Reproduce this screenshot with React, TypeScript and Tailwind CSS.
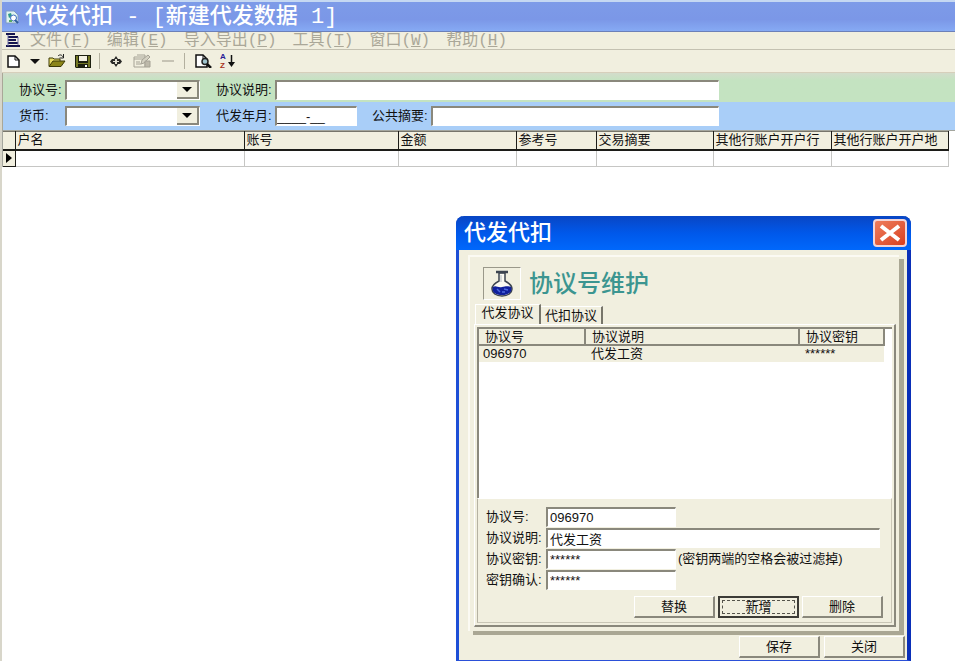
import type { ReactNode } from "react";
import { clsx } from "clsx";

const sans = "font-['Liberation_Sans','Noto_Sans_CJK_SC',sans-serif]";
const mono = "font-['Liberation_Mono','Noto_Sans_CJK_SC',monospace]";
const sunken = "border-t-2 border-l-2 border-[#8a887c] border-r border-b border-r-white border-b-white bg-white outline-none";

const menus = [
  ["文件", "F"],
  ["编辑", "E"],
  ["导入导出", "P"],
  ["工具", "T"],
  ["窗口", "W"],
  ["帮助", "H"],
];

const columns = [
  { name: "户名", width: "w-[229px]" },
  { name: "账号", width: "w-[154px]" },
  { name: "金额", width: "w-[118px]" },
  { name: "参考号", width: "w-[80px]" },
  { name: "交易摘要", width: "w-[117px]" },
  { name: "其他行账户开户行", width: "w-[118px]" },
  { name: "其他行账户开户地", width: "w-[117px]" },
];

function AppIcon() {
  return (
    <svg width="14" height="14" viewBox="0 0 14 14" aria-hidden="true">
      <path d="M1 1h8l4 4v8H1z" fill="#dff3ee" stroke="#7f9cc4" />
      <path d="M3 4l3-1 1 3-3 2z" fill="#2f9a8b" />
      <circle cx="8.500" cy="8" r="3" fill="#fff" stroke="#3a6fc0" />
      <path d="M10 10l3 3" stroke="#2f5c9c" strokeWidth="2" />
      <path d="M4 10h3v2H4z" fill="#56a868" />
    </svg>
  );
}

function DocIcon() {
  return (
    <svg width="14" height="15" viewBox="0 0 14 15" aria-hidden="true">
      <path d="M0 1h9M2 4h10M2 7h8M2 10h10M0 13h14" stroke="#15154f" strokeWidth="2" />
      <path d="M2 2v11M12 4v8" stroke="#6c6ca8" />
    </svg>
  );
}

function NewIcon() {
  return (
    <svg width="13" height="13" viewBox="0 0 13 13" aria-hidden="true">
      <path d="M1 1h7l4 4v7H1z" fill="#fff" stroke="#111" strokeWidth="1.500" />
      <path d="M8 1v4h4" fill="none" stroke="#111" />
    </svg>
  );
}

function OpenIcon() {
  return (
    <svg width="18" height="14" viewBox="0 0 18 14" aria-hidden="true">
      <path d="M1 12V4h4l1 1h6v3" fill="#e8dc62" stroke="#3c3a08" />
      <path d="M1 12.500L5 7h12l-4 5.500z" fill="#8b8518" stroke="#3c3a08" />
      <path d="M10 2c2-2 4-1 5 1M15.500 0v4h-4" fill="none" stroke="#222" />
    </svg>
  );
}

function SaveIcon() {
  return (
    <svg width="16" height="13" viewBox="0 0 16 13" aria-hidden="true">
      <path d="M0 0h16v13H1l-1-1z" fill="#1d2010" />
      <path d="M1 1h2v7h10V1h2v11h-2V9H3v3H1z" fill="#747824" />
      <path d="M4 1h8v5H4z" fill="#f4f1e2" />
      <path d="M10 10h2v2h-2z" fill="#fff" />
    </svg>
  );
}

function PlusIcon() {
  return (
    <svg width="12" height="11" viewBox="0 0 12 11" aria-hidden="true">
      <path d="M6 0l2 3h2l2 2.500-2 2.500H8l-2 3-2-3H2L0 5.500 2 3h2z" fill="#2a2a28" />
      <path d="M3 5h6v1H3zM5 3h2v5H5z" fill="#e4e2d4" />
    </svg>
  );
}

function EditIcon() {
  return (
    <svg width="18" height="14" viewBox="0 0 18 14" aria-hidden="true">
      <path d="M1 3h11v10H1zM1 5h11M3 8h4M3 10h5M4 1h8v2" fill="none" stroke="#a5a295" />
      <path d="M8 10l1-4 6-5 2 2-6 6z" fill="#d4d1c2" stroke="#a5a295" />
      <path d="M12 7h5v6h-5z" fill="#bdb9aa" stroke="#a5a295" />
    </svg>
  );
}

function PreviewIcon() {
  return (
    <svg width="17" height="14" viewBox="0 0 17 14" aria-hidden="true">
      <path d="M1 1h7l4 4v8H1z" fill="#fff" stroke="#111" strokeWidth="1.500" />
      <path d="M8 1v4h4" fill="none" stroke="#111" />
      <circle cx="10" cy="7.500" r="3" fill="#9fc4ce" stroke="#222" strokeWidth="1.500" />
      <path d="M12 10l4 4" stroke="#111" strokeWidth="2.500" />
    </svg>
  );
}

function SortIcon() {
  return (
    <svg width="18" height="20" viewBox="0 0 18 20" aria-hidden="true">
      <text x="2" y="8" fontSize="8" fontWeight="bold" fontFamily="Liberation Sans" fill="#2a1c96">A</text>
      <text x="2" y="17" fontSize="8" fontWeight="bold" fontFamily="Liberation Sans" fill="#a8321c">Z</text>
      <path d="M13.500 4v9" stroke="#111" strokeWidth="1.500" />
      <path d="M10 11h7l-3.500 5z" fill="#111" />
    </svg>
  );
}

function FlaskIcon() {
  return (
    <svg width="24" height="28" viewBox="0 0 24 28" aria-hidden="true">
      <path d="M9 3v8C5 13 2 16 2 19c0 4 4 7 10 7s10-3 10-7c0-3-3-6-7-8V3z" fill="#fbfaf2" stroke="#3d4450" strokeWidth="1.500" />
      <path d="M3 17c3-2 5 1 9 0s6-1 9 0c2 5-3 8-9 8s-11-3-9-8z" fill="#10209c" />
      <path d="M7 19l3 3M14 19l4 1M12 22h3" stroke="#4d6ae0" strokeWidth="1.500" />
      <path d="M6 2h12" stroke="#3d4450" strokeWidth="2.500" />
      <path d="M11 5v7" stroke="#b3bac2" />
    </svg>
  );
}

function ToolButton({ label, className, children }: { label: string; className: string; children: ReactNode }) {
  return (
    <button type="button" aria-label={label} className={clsx("flex h-5 items-center justify-center", className)}>
      {children}
    </button>
  );
}

function Combo({ id, label }: { id: string; label: string }) {
  return (
    <>
      <label htmlFor={id} className="w-[46px]">{label}</label>
      <div className="relative h-5 w-[135px]">
        <select id={id} className={clsx("h-full w-full appearance-none", sunken)} />
        <span className="pointer-events-none absolute top-0.5 right-px flex h-[17px] w-[22px] items-center justify-center border-r-2 border-b-2 border-[#8a887c] bg-[#f1efdf]">
          <svg width="10" height="5" viewBox="0 0 10 5" aria-hidden="true"><path d="M0 0h10L5 5z" fill="#000" /></svg>
        </span>
      </div>
    </>
  );
}

function PushButton({ children, focused = false }: { children: ReactNode; focused?: boolean }) {
  return (
    <button
      type="button"
      className={clsx(
        "h-[22px] w-[81px] bg-[#f1efdf]",
        focused
          ? "border-2 border-[#3c3b36] p-0.5"
          : "border-t border-l border-r-2 border-b-2 border-t-white border-l-white border-r-[#8a887c] border-b-[#8a887c]",
      )}
    >
      <span className={clsx("flex h-full items-center justify-center", focused && "border border-dashed border-[#55544c]")}>{children}</span>
    </button>
  );
}

function FormRow({ id, label, value, wide = false, note }: { id: string; label: string; value: string; wide?: boolean; note?: string }) {
  return (
    <div className="flex h-5 items-center">
      <label htmlFor={id} className="w-[60px]">{label}</label>
      <input
        id={id}
        type="text"
        defaultValue={value}
        className={clsx("h-full px-0.5", sunken, wide ? "w-[334px]" : "w-[130px]")}
      />
      {note && <span className="ml-0.5 whitespace-nowrap">{note}</span>}
    </div>
  );
}

function AgreementDialog() {
  return (
    <section
      role="dialog"
      aria-labelledby="dialog-title"
      className="absolute top-[216px] left-[454px] w-[455px] rounded-t-lg border-r-4 border-b border-l-[3px] border-r-[#0a2fb8] border-b-[#2b50d8] border-l-[#1d4fd6] bg-[#f1efdf]"
    >
      <header className="-mr-1 -ml-[3px] flex h-[34px] items-center justify-between rounded-t-lg bg-linear-to-b from-[#0846c4] via-[#0058ea] via-50% to-[#0068fc] pr-1 pl-2">
        <h2 id="dialog-title" className={clsx("pt-1 text-[22px] leading-[30px] font-medium text-white", mono)}>代发代扣</h2>
        <button type="button" aria-label="关闭窗口" className="flex h-7 w-[34px] items-center justify-center rounded-sm border-2 border-[#f3d5d6] bg-linear-to-br from-[#ee7d5c] to-[#d83d1c]">
          <svg width="22" height="18" viewBox="0 0 22 18" aria-hidden="true"><path d="M2 2l18 14M20 2L2 16" stroke="#fff" strokeWidth="4" /></svg>
        </button>
      </header>

      <div className="mt-[5px] mr-2 ml-[9px] border-t-2 border-l-2 border-[#fbfaf3] pb-1 shadow-[5px_4px_0_#aaa794]">
        <div className="flex items-center gap-2 pt-2.5 pl-[13px]">
          <div className="flex h-[33px] w-[38px] items-center justify-center border-t border-l border-r border-b border-t-[#9a988a] border-l-[#9a988a] border-r-white border-b-white">
            <FlaskIcon />
          </div>
          <h3 className={clsx("text-2xl leading-[30px] font-medium text-[#3c9590]", sans)}>协议号维护</h3>
        </div>

        <div role="tablist" className="mt-1 flex h-5 items-end pl-[5px]">
          <button type="button" role="tab" aria-selected="true" className="h-5 w-[66px] border-t border-l border-r-2 border-t-white border-l-white border-r-[#77756a] pb-1 leading-4">代发协议</button>
          <button type="button" role="tab" aria-selected="false" className="h-[18px] w-[62px] border-t border-r-2 border-t-white border-r-[#77756a] leading-4">代扣协议</button>
        </div>

        <div role="tabpanel" className="mr-[3px] ml-1 border-t border-r-2 border-b-2 border-l border-t-white border-r-[#8a887c] border-b-[#8a887c] border-l-white pt-0.5 pr-0.5 pb-0.5 pl-0.5">
          <div className="h-[171px] border-t-2 border-l-2 border-[#8a887c] bg-white">
            <table className="w-[406px] table-fixed border-collapse text-left">
              <colgroup>
                <col className="w-[106px]" />
                <col className="w-[214px]" />
                <col />
              </colgroup>
              <thead>
                <tr className="h-4 border-b-2 border-[#8a887c] bg-[#f1efdf] leading-[14px]">
                  {["协议号", "协议说明", "协议密钥"].map((name) => (
                    <th key={name} scope="col" className="border-r-2 border-[#8a887c] p-0 pl-1.5 font-normal">{name}</th>
                  ))}
                </tr>
              </thead>
              <tbody>
                <tr className="h-4 bg-[#f1efdf] leading-4">
                  <td className="p-0 pl-1">096970</td>
                  <td className="p-0 pl-1.5">代发工资</td>
                  <td className="p-0 pl-1.5">******</td>
                </tr>
              </tbody>
            </table>
          </div>

          <form className="border border-t-white border-r-[#c9c6b6] border-b-[#c9c6b6] border-l-[#b5b2a2] pt-2 pb-1 pl-2">
            <div className="flex flex-col gap-px">
              <FormRow id="agreement-no" label="协议号:" value="096970" />
              <FormRow id="agreement-desc" label="协议说明:" value="代发工资" wide />
              <FormRow id="agreement-key" label="协议密钥:" value="******" note="(密钥两端的空格会被过滤掉)" />
              <FormRow id="agreement-key-confirm" label="密钥确认:" value="******" />
            </div>
            <div className="mt-1.5 flex justify-end gap-[3px] pr-2">
              <PushButton>替换</PushButton>
              <PushButton focused>新增</PushButton>
              <PushButton>删除</PushButton>
            </div>
          </form>
        </div>
      </div>

      <footer className="mt-[5px] flex justify-end gap-1 pr-0.5 pb-0.5">
        <PushButton>保存</PushButton>
        <PushButton>关闭</PushButton>
      </footer>
    </section>
  );
}

export default function App() {
  return (
    <div className={clsx("relative min-h-screen overflow-hidden border-l-2 border-[#d8d6ca] bg-white text-[13px] leading-4 text-[#111]", sans)}>
      <header className="-ml-0.5 flex h-8 items-center gap-1.5 border-t-2 border-b border-t-[#c5d8f2] border-b-[#6c80b8] bg-linear-to-b from-[#7d9be8] via-[#7b97e7] via-60% to-[#86aaf4] pl-[5px]">
        <AppIcon />
        <h1 className={clsx("pt-0.5 text-[22px] leading-[26px] font-medium whitespace-pre text-white", mono)}>代发代扣 - [新建代发数据 1]</h1>
      </header>

      <nav className="flex h-[18px] items-center gap-2.5 border-b border-[#c4c1b1] bg-[#f1efdf] pl-1">
        <DocIcon />
        <ul className={clsx("flex gap-4 text-base leading-4 text-[#aaa798]", mono)}>
          {menus.map(([name, key]) => (
            <li key={key}>
              <button type="button" disabled className="block">{name}(<u>{key}</u>)</button>
            </li>
          ))}
        </ul>
      </nav>

      <div role="toolbar" className="flex h-[23px] items-center border-b border-[#d6cfbb] bg-[#f1efdf] pl-[3px]">
        <ToolButton label="新建" className="w-4"><NewIcon /></ToolButton>
        <ToolButton label="新建选项" className="ml-1.5 w-4">
          <svg width="10" height="5" viewBox="0 0 10 5" aria-hidden="true"><path d="M0 0h10L5 5z" fill="#111" /></svg>
        </ToolButton>
        <ToolButton label="打开" className="ml-1 w-5"><OpenIcon /></ToolButton>
        <ToolButton label="保存文件" className="ml-2 w-4"><SaveIcon /></ToolButton>
        <span className="ml-2 h-4 w-px bg-[#b3b09f]" />
        <ToolButton label="添加" className="ml-2 w-4"><PlusIcon /></ToolButton>
        <ToolButton label="修改" className="ml-2 w-5"><EditIcon /></ToolButton>
        <ToolButton label="移除" className="ml-2 w-4"><span className="h-0.5 w-3 bg-[#c6c3b4]" /></ToolButton>
        <span className="ml-2 h-4 w-px bg-[#b3b09f]" />
        <ToolButton label="预览" className="ml-2 w-5"><PreviewIcon /></ToolButton>
        <ToolButton label="排序" className="ml-1 w-5"><SortIcon /></ToolButton>
      </div>

      <div className="flex h-[29px] items-center border-l border-[#a9a798] bg-linear-to-b from-[#d3dccb] to-[#c4e3c1] to-25% pt-1 pl-4">
        <Combo id="agreement" label="协议号:" />
        <label htmlFor="description" className="ml-4 w-[59px]">协议说明:</label>
        <input id="description" type="text" className={clsx("h-5 w-[444px]", sunken)} />
      </div>
      <div className="flex h-7 items-center border-l border-[#a9a798] bg-[#a9cef8] pl-4">
        <Combo id="currency" label="货币:" />
        <label htmlFor="month" className="ml-4 w-[59px]">代发年月:</label>
        <input id="month" type="text" defaultValue="____-__" className={clsx("h-5 w-[82px]", sunken)} />
        <label htmlFor="summary" className="ml-[15px] w-[59px]">公共摘要:</label>
        <input id="summary" type="text" className={clsx("h-5 w-[288px]", sunken)} />
      </div>

      <div className="border-t border-l border-[#a4a69e]">
        <table className="w-[945px] table-fixed border-collapse text-left">
          <thead>
            <tr className="h-[18px] border-t border-b-2 border-t-[#77756a] border-b-[#1c1c18] bg-[#f1efdf]">
              <th className="w-3 border-r border-[#1c1c18] p-0" aria-label="行标记" />
              {columns.map((column) => (
                <th key={column.name} scope="col" className={clsx("border-r border-[#1c1c18] p-0 pl-0.5 font-normal whitespace-nowrap", column.width)}>{column.name}</th>
              ))}
            </tr>
          </thead>
          <tbody>
            <tr className="h-[17px] border-b border-[#c6c6c4]">
              <td className="border-r border-b border-[#1c1c18] bg-[#f1efdf] p-0 pl-[3px]">
                <svg width="6" height="10" viewBox="0 0 6 10" className="block" aria-hidden="true"><path d="M0 0v10l6-5z" fill="#000" /></svg>
              </td>
              {columns.map((column) => (
                <td key={column.name} className="border-r border-[#c6c6c4] p-0" />
              ))}
            </tr>
          </tbody>
        </table>
      </div>

      <AgreementDialog />
    </div>
  );
}
